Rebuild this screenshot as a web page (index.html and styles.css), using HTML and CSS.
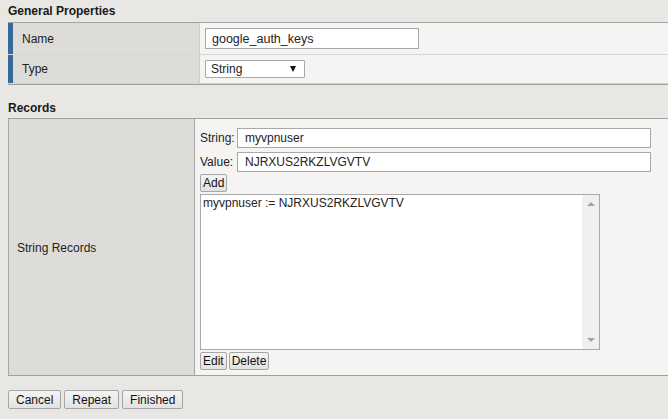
FILE: index.html
```html
<!DOCTYPE html>
<html>
<head>
<meta charset="utf-8">
<link rel="stylesheet" href="styles.css">
</head>
<body>
<div class="page">
  <h2 class="section-title">General Properties</h2>
  <div class="props">
    <div class="prop-row row-name">
      <div class="prop-label">Name</div>
      <div class="prop-value"><div class="text-input name-input">google_auth_keys</div></div>
    </div>
    <div class="prop-row row-type">
      <div class="prop-label">Type</div>
      <div class="prop-value">
        <div class="select"><span>String</span><span class="arrow"></span></div>
      </div>
    </div>
  </div>

  <h2 class="section-title records-title">Records</h2>
  <div class="records">
    <div class="rec-label">String Records</div>
    <div class="rec-value">
      <div class="field">
        <span class="field-label">String:</span>
        <div class="text-input field-input">myvpnuser</div>
      </div>
      <div class="field">
        <span class="field-label">Value:</span>
        <div class="text-input field-input">NJRXUS2RKZLVGVTV</div>
      </div>
      <div class="btn-row"><button class="btn">Add</button></div>
      <div class="listbox">
        <div class="list-content">myvpnuser := NJRXUS2RKZLVGVTV</div>
        <div class="scrollbar">
          <span class="sb-up"></span>
          <span class="sb-down"></span>
        </div>
      </div>
      <div class="btn-row edit-row">
        <button class="btn">Edit</button>
        <button class="btn">Delete</button>
      </div>
    </div>
  </div>

  <div class="actions">
    <button class="btn big">Cancel</button>
    <button class="btn big">Repeat</button>
    <button class="btn big">Finished</button>
  </div>
</div>
</body>
</html>
```
FILE: styles.css
```css
* { box-sizing: border-box; }
body {
  margin: 0;
  background: #e8e7e3;
  font: 12px "Liberation Sans", Arial, sans-serif;
  color: #222;
}
.page { padding-left: 8px; }
.section-title {
  margin: 0;
  font-size: 12px;
  font-weight: bold;
  line-height: 14px;
  padding: 4px 0 4px;
  color: #1a1a1a;
}
.records-title { padding: 16px 0 3px; }

.props {
  border-top: 1px solid #a3a3a3;
  border-bottom: 1px solid #a0a0a0;
}
.prop-row { display: flex; }
.row-name { height: 31px; }
.row-type {
  height: 30px;
  border-top: 1px solid #d6d6d6;
  border-bottom: 1px solid #d2d2d2;
}
.prop-label {
  width: 192px;
  border-left: 5px solid #376a99;
  border-right: 1px solid #cdcdcd;
  background: #dedcd9;
  padding-left: 9px;
  display: flex;
  align-items: center;
}
.prop-value {
  flex: 1;
  background: #f5f4f2;
  padding-left: 5px;
  display: flex;
  align-items: center;
}
.text-input {
  background: #fff;
  border: 1px solid #a9a9a9;
  display: flex;
  align-items: center;
  white-space: nowrap;
}
.name-input { width: 214px; height: 21px; padding-left: 6px; font-size: 12.5px; }
.select {
  width: 100px;
  height: 18px;
  background: #fff;
  border: 1px solid #a9a9a9;
  border-radius: 1px;
  display: flex;
  align-items: center;
  justify-content: space-between;
  padding: 0 8px 0 5px;
}
.arrow {
  width: 0;
  height: 0;
  border-left: 3.5px solid transparent;
  border-right: 3.5px solid transparent;
  border-top: 6px solid #111;
}

.records {
  display: flex;
  height: 258px;
  border-top: 1px solid #a0a0a0;
  border-bottom: 1px solid #a0a0a0;
  border-left: 1px solid #a8a8a8;
}
.rec-label {
  width: 186px;
  background: #dedcd9;
  border-right: 1px solid #a6a6a6;
  padding-left: 8px;
  display: flex;
  align-items: center;
  padding-top: 2px;
}
.rec-value {
  flex: 1;
  background: #f5f4f2;
  padding: 9px 0 0 5px;
  display: flex;
  flex-direction: column;
}
.field {
  display: grid;
  grid-template-columns: 37px 414px;
  align-items: center;
  height: 20px;
}
.field + .field { margin-top: 4px; }
.field-input { height: 20px; padding-left: 7px; }
.btn-row { display: flex; gap: 2px; margin-top: 2px; }
.btn {
  font: inherit;
  color: #111;
  height: 18px;
  padding: 0 2px;
  border: 1px solid #a6a6a6;
  border-radius: 2px;
  background: linear-gradient(#f4f4f4, #e2e2e2);
  line-height: 14px;
}
.listbox {
  margin-top: 2px;
  width: 400px;
  height: 156px;
  border: 1px solid #a9a9a9;
  background: #fff;
  display: flex;
}
.list-content {
  flex: 1;
  padding: 1px 2px;
  line-height: 14px;
  white-space: nowrap;
}
.scrollbar {
  width: 17px;
  background: #f0f0f0;
  display: flex;
  flex-direction: column;
  justify-content: space-between;
  align-items: center;
  padding: 7px 0 7px;
}
.sb-up, .sb-down {
  width: 0;
  height: 0;
  border-left: 4px solid transparent;
  border-right: 4px solid transparent;
}
.sb-up { border-bottom: 4px solid #a3a3a3; }
.sb-down { border-top: 4px solid #a3a3a3; }

.actions {
  display: flex;
  gap: 3px;
  margin-top: 14px;
}
.btn.big { height: 19px; padding: 0 7px; }
```
